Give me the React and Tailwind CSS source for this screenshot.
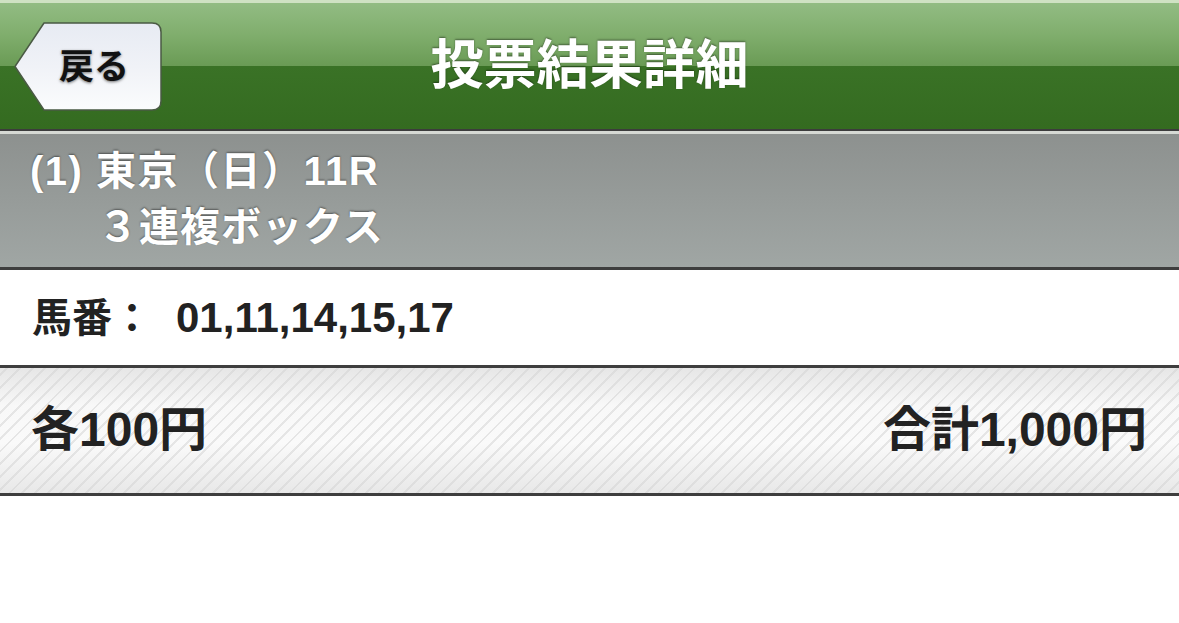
import React from "react";

const FONT = { fontFamily: '"Liberation Sans", "Noto Sans CJK JP", sans-serif' };

function BackButton() {
  return (
    <div className="relative w-[148px] h-[89px]">
      <svg width="148" height="89" viewBox="0 0 148 89" className="block">
        <defs>
          <linearGradient id="bb" x1="0" y1="0" x2="0" y2="1">
            <stop offset="0" stopColor="#e7ebf3" />
            <stop offset="0.5" stopColor="#f0f2f7" />
            <stop offset="1" stopColor="#fbfcfd" />
          </linearGradient>
        </defs>
        <path
          d="M1 44.5 L30 1 L138 1 Q147 1 147 10 L147 79 Q147 88 138 88 L30 88 Z"
          fill="url(#bb)"
          stroke="#4a5a44"
          strokeWidth="1.5"
          strokeLinejoin="round"
        />
      </svg>
      <div className="absolute inset-0 flex items-center justify-center pl-[12px]">
        <span
          className="text-[35px] font-bold text-[#111] leading-none [text-shadow:0_1px_3px_rgba(0,0,0,0.55)]"
          style={FONT}
        >
          戻る
        </span>
      </div>
    </div>
  );
}

export default function App() {
  return (
    <div className="w-[1179px] h-[623px] bg-white overflow-hidden" style={FONT}>
      {/* Header */}
      <div className="h-[129px] flex flex-col bg-[#356c21]">
        <div className="h-[3px] bg-[#cfe2c3]" />
        <div className="relative h-[126px] flex flex-col">
          <div className="h-[63px] bg-[linear-gradient(to_bottom,#92bc83,#80ae6d_50%,#6a9b55)]" />
          <div className="flex-1 bg-[linear-gradient(to_bottom,#3a7226,#346b20)]" />
          <div className="absolute inset-0 grid grid-cols-[1fr_auto_1fr] items-center">
            <div className="pl-[14px] pt-[1px]">
              <BackButton />
            </div>
            <div className="text-white font-bold text-[53px] leading-none [text-shadow:0_-1px_2px_rgba(0,0,0,0.45)] pb-[2px]">
              投票結果詳細
            </div>
            <div />
          </div>
        </div>
      </div>
      <div className="h-[2px] bg-[#3c3c3c]" />
      <div className="h-[3px] bg-[#d6d9d4]" />

      {/* Race info */}
      <div className="h-[133px] bg-[linear-gradient(to_bottom,#8d918f,#a0a6a4)] pl-[30px] pt-[12px] text-white font-bold text-[40px] [text-shadow:0_-1px_2px_rgba(0,0,0,0.45)]">
        <div className="leading-[50px] tracking-[1.5px]">(1) 東京（日）11R</div>
        <div className="leading-[62px] pl-[68px] tracking-[1px]">３連複ボックス</div>
      </div>
      <div className="h-[3px] bg-[#3e3e3e]" />

      {/* Horse numbers */}
      <div className="h-[95px] bg-white flex items-center pl-[32px] text-[#222] font-bold">
        <span className="text-[40px] leading-none">馬番：</span>
        <span className="text-[42px] leading-none ml-[24px]">01,11,14,15,17</span>
      </div>
      <div className="h-[3px] bg-[#3e3e3e]" />

      {/* Amounts */}
      <div className="h-[125px] relative bg-[linear-gradient(to_bottom,#e6e6e6,#f8f8f8_30%,#fafafa_60%,#e8e8e8)]">
        <div className="absolute inset-0 bg-[repeating-linear-gradient(-45deg,rgba(255,255,255,0)_0px,rgba(255,255,255,0)_7px,rgba(210,210,210,0.5)_7px,rgba(210,210,210,0.5)_9px)]" />
        <div className="relative h-full flex items-center justify-between pl-[31px] pr-[32px] text-[#222] font-bold text-[48px] leading-none pb-[2px]">
          <span>各100円</span>
          <span>合計1,000円</span>
        </div>
      </div>
      <div className="h-[3px] bg-[#3e3e3e]" />
    </div>
  );
}
